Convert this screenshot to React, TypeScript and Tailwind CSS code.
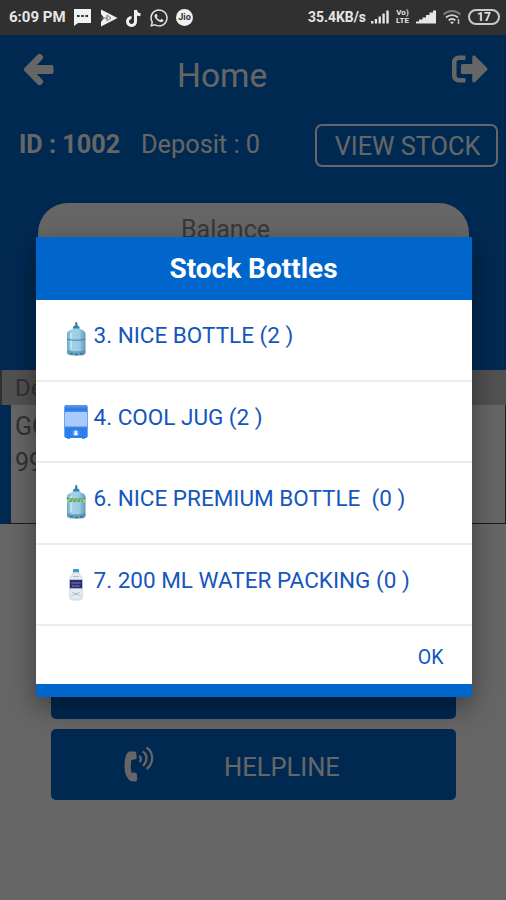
import type { ReactNode } from "react";
import { FaSignOutAlt, FaWhatsapp } from "react-icons/fa";

type BottleKind = "jar" | "jug" | "premium" | "small";

interface StockItem {
  id: number;
  label: string;
  kind: BottleKind;
}

const STOCK: StockItem[] = [
  { id: 3, label: "3. NICE BOTTLE (2 )", kind: "jar" },
  { id: 4, label: "4. COOL JUG (2 )", kind: "jug" },
  { id: 6, label: "6. NICE PREMIUM BOTTLE\u00a0 (0 )", kind: "premium" },
  { id: 7, label: "7. 200 ML WATER PACKING (0 )", kind: "small" },
];

function Jar({ premium = false }: { premium?: boolean }) {
  return (
    <svg width="24" height="36" viewBox="0 0 24 36">
      <defs>
        <linearGradient id="jar" x1="0" x2="1">
          <stop offset="0" stopColor="#6fa9c6" />
          <stop offset="0.25" stopColor="#a5d3e8" />
          <stop offset="0.65" stopColor="#9acce4" />
          <stop offset="1" stopColor="#6199b8" />
        </linearGradient>
      </defs>
      <path d="M11.500 0h1.600l.5 3.500 1.900 1.300v2.700H9V4.800l1.900-1.300z" fill="#2f86b4" />
      <path d="M9 6.500h6.600c2 1.200 5.900 2.200 5.900 5.500v18.500c0 2.600-3 3.500-9.200 3.500S3 33.100 3 30.500V12c0-3.300 4-4.300 6-5.500z" fill="url(#jar)" />
      <path d="M3.300 28c3 1.800 15 1.800 18 0v3c-2 3-16 3-18 0z" fill="#4788aa" opacity=".65" />
      <path d="M6 31.800h3M11 32.300h3M16 31.800h3" stroke="#2c607c" strokeWidth="1" />
      <path d="M7 11v16" stroke="#d8f1fa" strokeWidth="1.600" opacity=".7" />
      {premium ? (
        <>
          <path d="M3 12.800c5 1.200 13.500 1.200 18.500 0v4c-5 1.200-13.500 1.200-18.500 0z" fill="#a3cba0" />
          <path d="M2.500 13.300c5 1 14 1 19.500 0M5 16h14" stroke="#5c9a55" strokeWidth="1.300" strokeDasharray="3 1" fill="none" />
        </>
      ) : (
        <path d="M3.200 17.300c5 1 13 1 18 0" stroke="#47809e" strokeWidth="1.100" fill="none" />
      )}
    </svg>
  );
}

function Jug() {
  return (
    <svg width="24" height="36" viewBox="0 0 24 36">
      <rect x=".3" y="1" width="23.400" height="33" rx="2" fill="#2f7fea" />
      <path d="M1 3.500C1 1.500 3 1 5 1h14c2 0 4 .5 4 2.500z" fill="#5b93e0" />
      <rect x="1" y="7.500" width="22" height="15.500" fill="#a9cbfb" />
      <path d="M.3 7.500h23.400M.3 23h23.400" stroke="#4b8df0" strokeWidth="1" />
      <circle cx="11.800" cy="29" r="3.200" fill="#68a6f7" />
      <path d="M10.800 27h2v1.500l.9 2.500h-3.800l.9-2.500z" fill="#fff" />
      <path d="M3 34.200h3M18 34.200h3" stroke="#2465c7" strokeWidth="1" />
    </svg>
  );
}

function SmallBottle() {
  return (
    <svg width="24" height="36" viewBox="0 0 24 36">
      <rect x="9" y="2" width="6" height="3.600" rx=".6" fill="#3d9ac7" />
      <path d="M9.200 5.500h5.600c.3 3 3.400 3.700 3.400 7v18c0 1.700-1 2.500-2.600 2.500H8.400c-1.600 0-2.600-.8-2.600-2.500v-18c0-3.300 3.100-4 3.400-7z" fill="#e4ebf1" stroke="#b9c5d1" strokeWidth=".7" />
      <path d="M8 25c2 2 6 2 8 0M7.500 29c2-2 7-2 9 0M9 9.500h6" stroke="#aab8c6" strokeWidth=".9" fill="none" />
      <rect x="5.800" y="12.800" width="12.400" height="8.500" fill="#292d72" />
      <path d="M7.500 16h9M8 19h8" stroke="#9498c2" strokeWidth="1.100" strokeDasharray="2 .6" />
    </svg>
  );
}

function BottleIcon({ kind }: { kind: BottleKind }) {
  if (kind === "jug") return <Jug />;
  if (kind === "small") return <SmallBottle />;
  return <Jar premium={kind === "premium"} />;
}

function BackArrow({ className }: { className?: string }) {
  return (
    <svg viewBox="0 0 31 33" className={className} fill="currentColor">
      <path d="M1.200 15.300 14.800 1.600q2-1.600 3.800.2 2.600 2.300.8 4.500L13.800 12H28.500q2 0 2 2v5q0 2-2 2H13.800l5.600 5.700q1.800 2.200-.8 4.500-1.800 1.800-3.800.2L1.200 17.700q-1.200-1.200 0-2.400z" />
    </svg>
  );
}

function PhoneWaves({ className }: { className?: string }) {
  return (
    <svg viewBox="0 0 30 36" className={className} fill="none">
      <path d="M5.500 5.500h5.300q1.300 0 1.400 1.300l.5 4.700q0 1.600-1.300 1.800l-4 .8q-1.200 6.200 0 12.300l4 .3q1.300.3 1.500 1.700l.3 4.600q0 1.700-1.400 2.200-5.300 1.200-8-3Q.5 28.500.5 20q0-8.500 2.300-12.300 1-1.900 2.700-2.200z" fill="currentColor" />
      <path d="M15.200 10c2 1.400 2.300 3.800.2 6M18.700 5.500c5 3 5 10 .2 14.300M22.500 1.500c7.500 5 7.500 15.500.2 21.500" stroke="currentColor" strokeWidth="2.300" />
    </svg>
  );
}

function SignalBars({ width, filled = false }: { width: number; filled?: boolean }) {
  return (
    <svg width={width} height="14" viewBox="0 0 20 14" preserveAspectRatio="none" fill="currentColor">
      {filled ? (
        <path d="M0 13.500v-2h3V9.500h3.500V7.500H10V5h3.500V2.500H17V.5h3v13z" />
      ) : (
        <path d="M0 13.500V11h2.600v2.500zM4.200 13.500V9h2.600v4.500zM8.400 13.500V6.500H11v7zM12.700 13.500V3.500h2.600v10zM17 13.500V.5h2.700v13z" />
      )}
    </svg>
  );
}

function StatusBar() {
  return (
    <div className="flex h-[35px] items-center justify-between bg-[#303030] pr-[6px] pl-[9px] text-[#e6e6e6]">
      <div className="flex items-center">
        <span className="w-[65px] text-[15px] font-bold whitespace-nowrap">6:09 PM</span>
        <svg width="17" height="17" viewBox="0 0 17 17" className="mr-[9px]">
          <path d="M0 0h17v14H4l-4 3z" fill="#f1f1f1" />
          <path d="M3 7h2.600M7.200 7h2.600M11.400 7H14" stroke="#303030" strokeWidth="2" />
        </svg>
        <svg width="18" height="18" viewBox="0 0 18 18" className="mr-[8px]">
          <path d="M1 .5L17.500 9 1 17.500V13L4 9 1 5z" fill="#f1f1f1" />
          <path d="M1 9h7M7 6l4 3-4 3z" stroke="#777" strokeWidth="1" fill="none" />
        </svg>
        <svg width="16" height="18" viewBox="0 0 16 18" className="mr-[7px]">
          <path d="M9.500 1v11.200a4 4 0 1 1-4-3.700M9.500 1c.3 3 2 4.600 5 4.800" stroke="#f1f1f1" strokeWidth="3" fill="none" />
        </svg>
        <FaWhatsapp className="mr-[7px] size-[20px]" />
        <span className="flex size-[17px] items-center justify-center rounded-full bg-[#f1f1f1] text-[9px] font-bold text-[#303030]">Jio</span>
      </div>
      <div className="flex items-center">
        <span className="mr-[5px] text-[13.900px] font-bold whitespace-nowrap">35.4KB/s</span>
        <SignalBars width={18} />
        <span className="mx-[6px] flex w-[15px] flex-col items-center text-[8px] font-bold whitespace-nowrap">
          <span className="h-[8px] leading-[8px]">Vo)</span>
          <span className="h-[8px] leading-[8px]">LTE</span>
        </span>
        <SignalBars width={20} filled />
        <svg width="20" height="16" viewBox="0 0 20 16" className="mx-[6px]" fill="none">
          <path d="M1.500 5.500c5-4.700 12-4.700 17 0" stroke="#7d7d7d" strokeWidth="1.800" />
          <path d="M4 8.500c3.500-3.300 8.500-3.300 12 0" stroke="#cfcfcf" strokeWidth="1.800" />
          <path d="M6.700 11.300c2-1.800 4.600-1.800 6.600 0" stroke="#e6e6e6" strokeWidth="1.800" />
          <path d="M8 12.800h4l-2 2.400z" fill="#e6e6e6" />
          <path d="M16.500 10v5" stroke="#bdbdbd" strokeWidth="1.500" />
        </svg>
        <span className="flex h-[16px] w-[32px] items-center justify-center rounded-full border-[2.500px] border-[#c9c9c9] text-[12px] leading-none font-bold">17</span>
      </div>
    </div>
  );
}

function MenuButton({ icon, label }: { icon?: ReactNode; label: string }) {
  return (
    <div className="flex h-[71px] w-[405px] items-center rounded-[5px] bg-[#0066cc] text-white">
      <span className="ml-[73px] w-[100px] pb-[2px]">{icon}</span>
      <span className="pt-[7px] text-[25.500px] leading-none">{label}</span>
    </div>
  );
}

function HomeScreen() {
  return (
    <div className="flex h-full flex-col bg-white">
      <div className="flex h-[335px] flex-col bg-[#0066cc] text-white">
        <div className="flex h-[80px] items-center pr-[18px] pl-[23px]">
          <BackArrow className="mb-[11px] h-[33px] w-[31px]" />
          <h1 className="ml-[123px] pt-[1px] text-[33.500px] leading-none">Home</h1>
          <FaSignOutAlt className="mb-[13px] ml-auto size-[36px]" />
        </div>
        <div className="flex h-[60px] items-center pr-[8px] pl-[19px]">
          <span className="w-[122px] text-[25.200px] leading-none font-bold whitespace-nowrap">ID : 1002</span>
          <span className="text-[25.300px] leading-none whitespace-nowrap">Deposit : 0</span>
          <button className="ml-auto h-[43px] w-[183px] rounded-[7px] border-2 border-white pt-[3px] pl-[2px] text-[25.300px] leading-none whitespace-nowrap">VIEW STOCK</button>
        </div>
        <div className="mt-[28px] ml-[38px] h-[110px] w-[431px] rounded-t-[30px] bg-white pt-[14px] pl-[143px] text-[25px] leading-none text-[#8c8c8c]">Balance</div>
      </div>

      {/* delivery list */}
      <div className="h-[35px] border-l-2 border-[#777] bg-[#cacaca] pt-[4px] pl-[13px] text-[24px] text-[#7d7d7d]">
        <p className="leading-[28px]">Delivery</p>
      </div>
      <div className="h-[119px] border-r border-b border-l-[11px] border-[#444] border-l-[#0066cc] pt-[4px] pl-[4px] text-[25px] leading-[36px] text-[#7d7d7d]">
        <p>GOPAL</p>
        <p>9900</p>
      </div>

      <div className="mt-[124px] ml-[51px] flex flex-col gap-[10px]">
        <MenuButton label="" />
        <MenuButton icon={<PhoneWaves className="h-[36px] w-[30px]" />} label="HELPLINE" />
      </div>
    </div>
  );
}

function StockDialog() {
  return (
    <div className="absolute inset-0 flex items-center justify-center bg-black/60 pb-px pl-px">
      <div className="flex h-[460px] w-[436px] flex-col bg-white shadow-[0_10px_26px_rgba(0,0,0,0.4)]">
        <h2 className="flex h-[63px] shrink-0 items-center justify-center bg-[#0066cc] text-[28px] leading-none font-bold text-white">Stock Bottles</h2>
        {STOCK.map((item) => (
          <div key={item.id} className="flex h-[81.600px] shrink-0 items-start border-b-2 border-[#ececec] pt-[22px] pl-[28px] text-[#1556bd]">
            <BottleIcon kind={item.kind} />
            <span className="ml-[6px] text-[22.500px] leading-[26px] whitespace-nowrap">{item.label}</span>
          </div>
        ))}
        <div className="flex flex-1 items-center justify-end pt-[4px] pr-[28px] text-[19.500px] text-[#0d58c4]">OK</div>
        <div className="h-[13px] shrink-0 bg-[#0066cc]" />
      </div>
    </div>
  );
}

export default function App() {
  return (
    <div className="flex h-[900px] w-[506px] flex-col overflow-hidden font-['Roboto',sans-serif]">
      <StatusBar />
      <div className="relative flex-1">
        <HomeScreen />
        <StockDialog />
      </div>
    </div>
  );
}
